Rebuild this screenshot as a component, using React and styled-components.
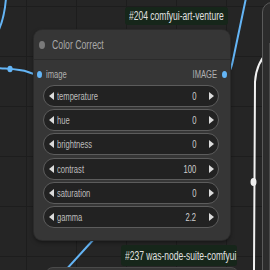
import React from "react";
import styled, { createGlobalStyle } from "styled-components";

const GlobalStyle = createGlobalStyle`
  body {
    margin: 0;
    background: #232323;
    font-family: "Liberation Sans", Arial, sans-serif;
  }
`;

const widgets = [
  { name: "temperature", value: "0" },
  { name: "hue", value: "0" },
  { name: "brightness", value: "0" },
  { name: "contrast", value: "100" },
  { name: "saturation", value: "0" },
  { name: "gamma", value: "2.2" },
];

export default function App() {
  return (
    <>
      <GlobalStyle />
      <Canvas>
        <Wires width="270" height="270">
          <path d="M6,-2 C5,12 3,22 -3,34" />
          <path d="M-3,68 C8,69 20,69 28,72 C33,74 36,75 40,75" />
          <ellipse cx="10" cy="69" rx="2.6" ry="3.2" fill="#64b5f6" stroke="none" />
          <path d="M224,75 C229,74 231,70 233,60 C237,40 242,18 246,-2" />
          <path d="M226,77 C230,79 231,83 229,88" />
          <path d="M94,239 L64,272" />
          <path className="white" d="M272,48 C262,56 256,66 255,82 L254,272" />
          <ellipse cx="253.5" cy="182" rx="3" ry="4" fill="#eee" stroke="none" />
        </Wires>

        <SideNode>
          <SideWidget />
        </SideNode>
        <LowerNode />

        <Node>
          <TitleBar>
            <TitleDot />
            <Title>Color Correct</Title>
          </TitleBar>
          <Body>
            <SlotRow>
              <SlotSide>
                <SlotDot />
                <SlotLabel>image</SlotLabel>
              </SlotSide>
              <SlotSide>
                <SlotLabel $end>IMAGE</SlotLabel>
                <SlotDot />
              </SlotSide>
            </SlotRow>
            <WidgetList>
              {widgets.map((w) => (
                <Widget key={w.name}>
                  <Arrow $dir="left" />
                  <WidgetName>{w.name}</WidgetName>
                  <WidgetValue>{w.value}</WidgetValue>
                  <Arrow $dir="right" />
                </Widget>
              ))}
            </WidgetList>
          </Body>
        </Node>

        <Badge $left={125} $top={7} $w={103} $h={18}>
          <BadgeText>#204 comfyui-art-venture</BadgeText>
        </Badge>
        <Badge $left={121} $top={245} $w={116} $h={21}>
          <BadgeText>#237 was-node-suite-comfyui</BadgeText>
        </Badge>
      </Canvas>
    </>
  );
}

/* the screenshot is horizontally condensed, so text is narrowed to match */
const Narrow = styled.span`
  display: inline-block;
  white-space: nowrap;
  transform: scaleX(0.66);
  transform-origin: ${(p) => (p.$end ? "right" : "left")} center;
`;

const Canvas = styled.div`
  position: relative;
  width: 270px;
  height: 270px;
  overflow: hidden;
  background-color: #252525;
  background-image:
    linear-gradient(to right, #1d1d1d 1px, transparent 1px),
    linear-gradient(to bottom, #1d1d1d 1px, transparent 1px);
  background-size: 50px 50px;
  background-position: 26px 6px;
`;

const Wires = styled.svg`
  position: absolute;
  left: 0;
  top: 0;
  path {
    fill: none;
    stroke: #64b5f6;
    stroke-width: 2;
  }
  path.white {
    stroke: #f2f2f2;
  }
`;

const Node = styled.div`
  position: absolute;
  left: 34px;
  top: 30px;
  width: 196px;
  height: 210px;
  display: flex;
  flex-direction: column;
  background: #363636;
  border-radius: 8px;
  box-shadow: 0 0 0 1px #2a2a2a, 0 2px 4px rgba(0, 0, 0, 0.5);
`;

const TitleBar = styled.div`
  height: 30px;
  display: flex;
  align-items: center;
  gap: 7px;
  padding-left: 5px;
  border-bottom: 1px solid #2b2b2b;
  box-sizing: border-box;
`;

const TitleDot = styled.span`
  width: 6px;
  height: 8px;
  border-radius: 50%;
  background: #7a7a7a;
`;

const Title = styled(Narrow)`
  font-size: 13px;
  transform: scaleX(0.67);
  color: #a8a8a8;
`;

const Body = styled.div`
  display: flex;
  flex-direction: column;
  padding: 3px 11px 0 9px;
`;

const SlotRow = styled.div`
  height: 22px;
  margin: 0 -8px 0 -6px;
  display: flex;
  align-items: center;
  justify-content: space-between;
`;

const SlotSide = styled.div`
  display: flex;
  align-items: center;
  gap: 4px;
  &:last-child {
    gap: 5px;
  }
`;

const SlotDot = styled.span`
  width: 5px;
  height: 7px;
  border-radius: 50%;
  background: #64b5f6;
`;

const SlotLabel = styled(Narrow)`
  font-size: 11.5px;
  color: #b0b0b0;
`;

const WidgetList = styled.div`
  display: flex;
  flex-direction: column;
  gap: 2.2px;
`;

const Widget = styled.div`
  height: 22px;
  box-sizing: border-box;
  display: flex;
  align-items: center;
  padding: 0 4px 0 5px;
  background: #222;
  border: 1px solid #5c5c5c;
  border-radius: 11px;
`;

const Arrow = styled.span`
  width: 0;
  height: 0;
  border-top: 4px solid transparent;
  border-bottom: 4px solid transparent;
  ${(p) =>
    p.$dir === "left"
      ? "border-right: 5px solid #dcdcdc; margin-right: 3px;"
      : "border-left: 5px solid #dcdcdc; margin-left: 13px;"}
`;

const WidgetName = styled(Narrow)`
  flex: 1;
  font-size: 11.5px;
  color: #bdbdbd;
`;

const WidgetValue = styled(Narrow).attrs({ $end: true })`
  font-size: 11.5px;
  color: #d0d0d0;
`;

const Badge = styled.div`
  position: absolute;
  left: ${(p) => p.$left}px;
  top: ${(p) => p.$top}px;
  width: ${(p) => p.$w}px;
  height: ${(p) => p.$h}px;
  box-sizing: border-box;
  display: flex;
  align-items: center;
  padding: 0 4px;
  background: #16261a;
  border-radius: 3px;
`;

const BadgeText = styled(Narrow)`
  font-size: 12px;
  transform: scaleX(0.71);
  color: #e0e0e0;
`;

const SideNode = styled.div`
  position: absolute;
  left: 262px;
  top: 2px;
  width: 40px;
  height: 300px;
  box-sizing: border-box;
  padding: 40px 0 0 6px;
  background: #2c2c2c;
  border: 1px solid #5a5a5a;
  border-radius: 10px;
`;

const SideWidget = styled.div`
  height: 100%;
  border-left: 1px solid #4a4a4a;
  background: #262626;
`;

const LowerNode = styled.div`
  position: absolute;
  left: 45px;
  top: 267px;
  width: 192px;
  height: 40px;
  background: #363636;
  border: 1px solid #4a4a4a;
  border-radius: 8px;
`;
